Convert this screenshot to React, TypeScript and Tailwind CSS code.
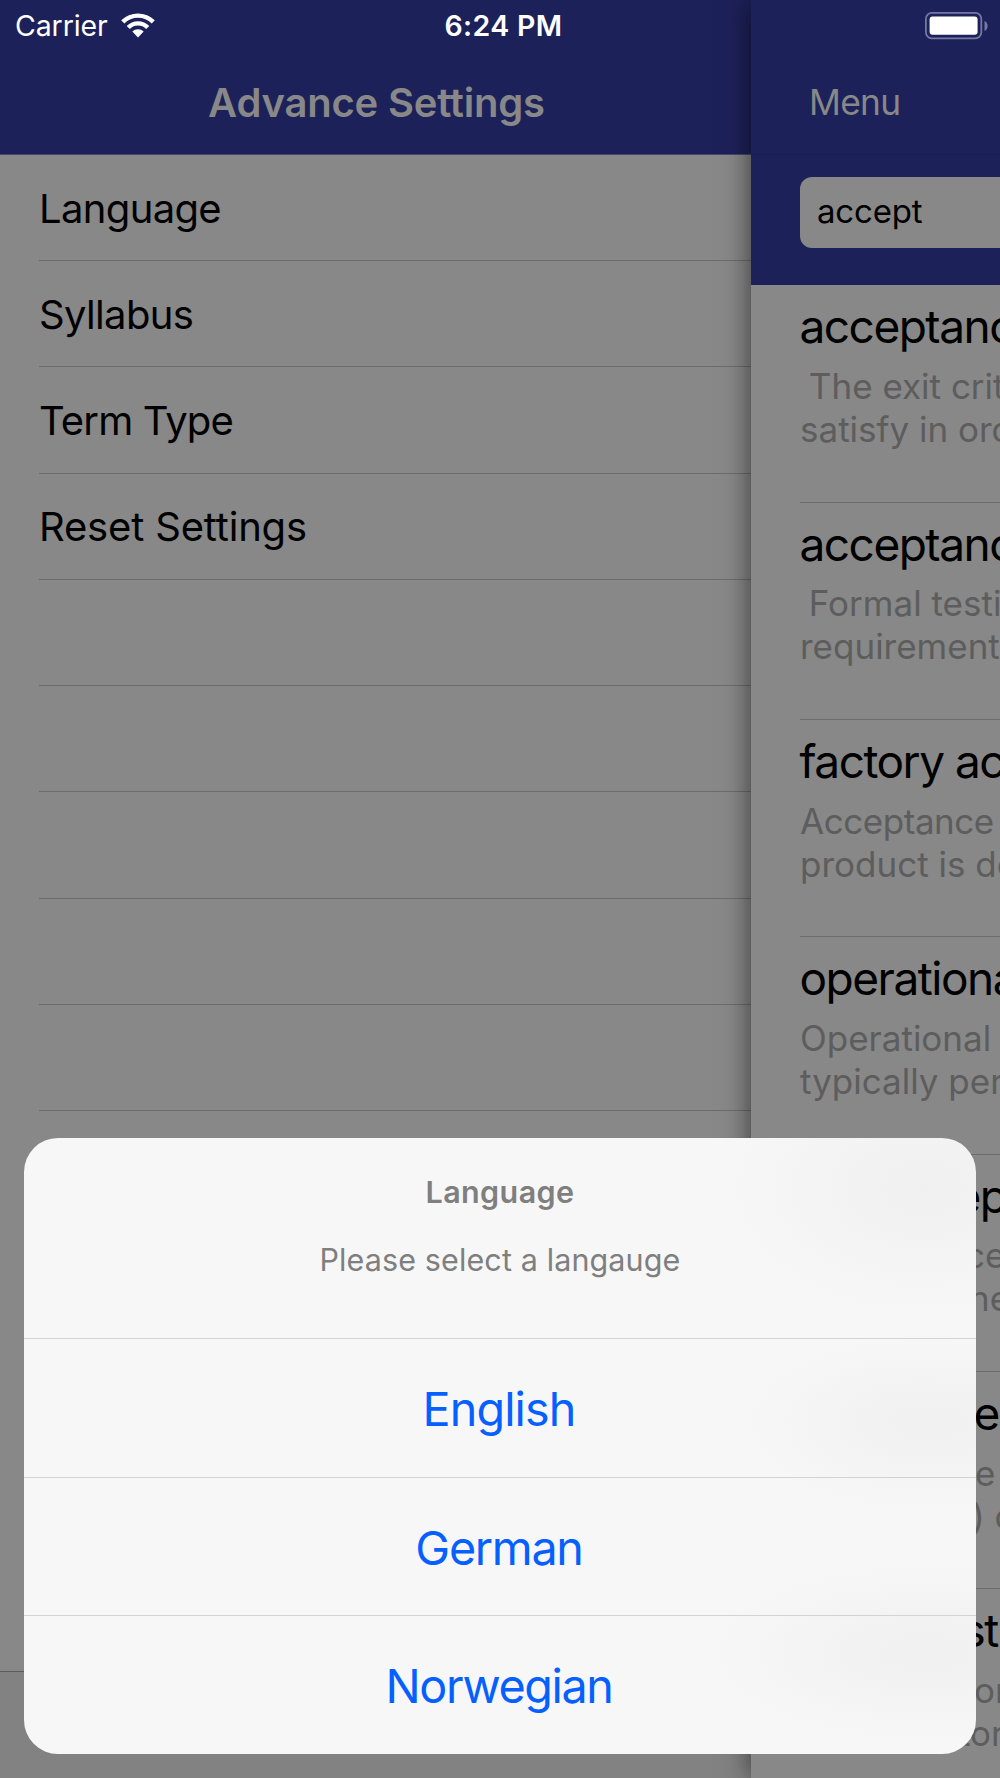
import clsx from "clsx";

const SETTINGS = [
  { label: "Language", tracking: "tracking-[-0.65px]" },
  { label: "Syllabus", tracking: "tracking-[-0.65px]" },
  { label: "Term Type", tracking: "tracking-[-0.85px]" },
  { label: "Reset Settings", tracking: "tracking-[-0.18px]" },
  { label: "" },
  { label: "" },
  { label: "" },
  { label: "" },
  { label: "" },
];

const LANGUAGES = [
  { name: "English", tracking: "tracking-[-0.9px]" },
  { name: "German", tracking: "tracking-[-1.3px]" },
  { name: "Norwegian", tracking: "tracking-[-1.4px]" },
];

interface Line {
  text: string;
  className?: string;
}

interface Term {
  title: Line;
  lines: Line[];
}

// the last three rows only peek out to the right of the sheet
const TERMS: Term[] = [
  {
    title: { text: "acceptanc" },
    lines: [{ text: " The exit crit", className: "-ml-px" }, { text: "satisfy in ord" }],
  },
  {
    title: { text: "acceptanc" },
    lines: [{ text: " Formal testi", className: "-ml-px" }, { text: "requirement" }],
  },
  {
    title: { text: "factory ac" },
    lines: [{ text: "Acceptance", className: "tracking-[-0.45px]" }, { text: "product is de" }],
  },
  {
    title: { text: "operationa" },
    lines: [{ text: "Operational" }, { text: "typically per" }],
  },
  {
    title: { text: "ep", className: "pl-[155px]" },
    lines: [
      { text: "ce", className: "pl-[165px]" },
      { text: "ne", className: "pl-[169px]" },
    ],
  },
  {
    title: { text: "e", className: "pl-[174px]" },
    lines: [
      { text: "e", className: "pl-[175px]" },
      { text: ") o", className: "pl-[172px]" },
    ],
  },
  {
    title: { text: "st", className: "pl-[162px]" },
    lines: [
      { text: "or", className: "pl-[174px]" },
      { text: "tor", className: "pl-[159px]" },
    ],
  },
];

function WifiIcon() {
  return (
    <svg viewBox="0 0 34 25" className="w-[34px] h-[25px]" fill="#fff">
      <path d="M0.2 7.3 A24 24 0 0 1 33.8 7.3 L30.7 10.4 A19.5 19.5 0 0 0 3.3 10.4 Z" />
      <path d="M5.7 12.9 A16 16 0 0 1 28.3 12.9 L25.2 16 A11.6 11.6 0 0 0 8.8 16 Z" />
      <path d="M11.3 18.5 A8.2 8.2 0 0 1 22.7 18.5 L17 24.4 Z" />
    </svg>
  );
}

function BatteryIcon() {
  return (
    <svg viewBox="0 0 64 28" className="w-[64px] h-[28px]">
      <rect x="0.9" y="0.9" width="55.4" height="25.4" rx="6" fill="none" stroke="#7578a0" strokeWidth="1.8" />
      <rect x="4.6" y="4.6" width="48" height="18.2" rx="3" fill="#fff" />
      <path d="M59.5 9 C63.7 10.5 63.7 17.5 59.5 19 Z" fill="#7578a0" />
    </svg>
  );
}

function SettingsPanel() {
  return (
    <div className="flex w-[751px] shrink-0 flex-col">
      <div className="h-[155px] border-b border-[#45486f] bg-[#1d2159] pt-[78px] pl-[2px] text-center text-[40px] leading-[50px] font-semibold text-[#888]">
        <span className="tracking-[-0.2px]">Advance Settings</span>
      </div>
      <div className="flex-1">
        {SETTINGS.map((item, i) => (
          <div key={i} className="ml-[39px] h-[106.24px] border-b border-[#6c6c6d] pt-[28.5px]">
            <span className={clsx("block text-[40px] leading-[50px] text-black", item.tracking)}>{item.label}</span>
          </div>
        ))}
      </div>
      <div className="h-[107px] border-t border-[#5e5e5e] bg-[#828282]" />
    </div>
  );
}

function TermRow({ term }: { term: Term }) {
  return (
    <div className="ml-[49px] h-[217.35px] border-b border-[#6c6c6d] pt-[13px] whitespace-pre">
      <p className={clsx("-ml-[0.5px] text-[46px] leading-[56px] tracking-[-1.5px] text-black", term.title.className)}>
        {term.title.text}
      </p>
      <div className="pt-[10.6px]">
        {term.lines.map((line) => (
          <p key={line.text} className={clsx("text-[35px] leading-[43px] text-[#5d5d5d]", line.className)}>
            {line.text}
          </p>
        ))}
      </div>
    </div>
  );
}

function TermsPanel() {
  return (
    <div className="relative w-[249px] shrink-0 bg-[#888] shadow-[0_0_26px_rgba(0,0,0,0.6)]">
      <div className="h-[155px] border-b border-[#1a1d4e] bg-[#1d2159] pt-[79px] pl-[58px]">
        <span className="text-[35.3px] leading-[48px] tracking-[-0.7px] text-[#888]">Menu</span>
      </div>
      <div className="h-[130px] bg-[#1d2159] pt-[22px] pl-[49px]">
        <div className="h-[71px] rounded-l-[12px] bg-[#888] pt-[11px] pl-[17px]">
          <span className="text-[33px] leading-[46px] tracking-[-0.2px] text-black">accept</span>
        </div>
      </div>
      <div className="h-[1493px] overflow-hidden pt-[0.4px]">
        {TERMS.map((term, i) => (
          <TermRow key={i} term={term} />
        ))}
      </div>
    </div>
  );
}

function LanguageSheet() {
  return (
    <div className="absolute top-[1138px] left-[24px] h-[616px] w-[952px] overflow-hidden rounded-[34px] bg-[#f7f7f7] bg-[radial-gradient(ellipse_200px_130px_at_900px_50px,#f0f0f0,transparent),radial-gradient(ellipse_190px_90px_at_905px_285px,#f0f0f0,transparent),radial-gradient(ellipse_220px_90px_at_900px_515px,#f0f0f0,transparent)] text-center">
      <div className="h-[200.4px] pt-[35px] text-[#7f7f7f]">
        <h2 className="text-[30.5px] leading-[38px] font-semibold tracking-[0.4px]">Language</h2>
        <p className="pt-[30px] text-[30.5px] leading-[38px] tracking-[0.12px]">Please select a langauge</p>
      </div>
      {LANGUAGES.map((lang) => (
        <button
          key={lang.name}
          className={clsx(
            "block h-[138.3px] w-full border-t border-[#d3d3d3] pt-px pr-[2px] text-[46.7px] leading-[138px] text-[#0560ff]",
            lang.tracking,
          )}
        >
          {lang.name}
        </button>
      ))}
    </div>
  );
}

export default function App() {
  return (
    <div className="relative h-[1778px] w-[1000px] overflow-hidden bg-[#888] font-['Inter',sans-serif]">
      <div className="flex h-full">
        <SettingsPanel />
        <TermsPanel />
      </div>

      {/* status bar floats above both panels */}
      <div className="absolute inset-x-0 top-0 grid h-[51px] grid-cols-3 items-center text-[28.5px] leading-[51px] text-white">
        <div className="flex items-center gap-[13px] pl-[15px]">
          <span className="tracking-[-0.1px]">Carrier</span>
          <WifiIcon />
        </div>
        <span className="pl-[7px] text-center font-semibold tracking-[0.35px]">6:24 PM</span>
        <div className="flex justify-end pr-[11px]">
          <BatteryIcon />
        </div>
      </div>

      <LanguageSheet />
    </div>
  );
}
